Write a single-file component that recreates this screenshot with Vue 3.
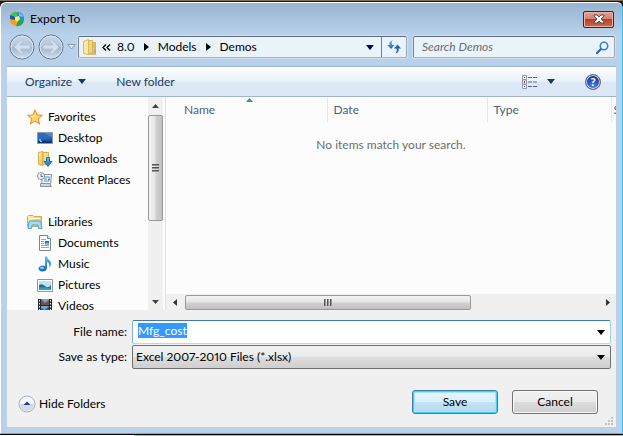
<script setup>
import { ref, onMounted } from 'vue'

const crumbs = ['8.0', 'Models', 'Demos']
const groups = [
  {
    name: 'Favorites',
    icon: 'star',
    items: [
      { name: 'Desktop', icon: 'desktop' },
      { name: 'Downloads', icon: 'downloads' },
      { name: 'Recent Places', icon: 'recent' }
    ]
  },
  {
    name: 'Libraries',
    icon: 'libraries',
    items: [
      { name: 'Documents', icon: 'documents' },
      { name: 'Music', icon: 'music' },
      { name: 'Pictures', icon: 'pictures' },
      { name: 'Videos', icon: 'videos' }
    ]
  }
]

const fileName = ref('Mfg_cost')
const search = ref('')
const fileInput = ref(null)

onMounted(() => {
  fileInput.value.focus({ preventScroll: true })
  fileInput.value.select()
})
</script>

<template>
  <div class="desktop">
    <svg class="defs" width="0" height="0" aria-hidden="true">
      <defs>
        <linearGradient id="folder" x1="0" y1="0" x2="1" y2="1">
          <stop offset="0" stop-color="#fff3b4" />
          <stop offset="1" stop-color="#e3b94c" />
        </linearGradient>
        <linearGradient id="blueArrow" x1="0" y1="0" x2="0" y2="1">
          <stop offset="0" stop-color="#5cc4f2" />
          <stop offset="1" stop-color="#1d5fae" />
        </linearGradient>
        <linearGradient id="round" x1="0" y1="0" x2="0" y2="1">
          <stop offset="0" stop-color="#c9d7e8" />
          <stop offset=".48" stop-color="#b3c5da" />
          <stop offset=".52" stop-color="#9fb5cd" />
          <stop offset="1" stop-color="#cfe0f2" />
        </linearGradient>

        <symbol id="i-star" viewBox="0 0 16 16">
          <path d="M8 .8 10 6l5.400.3-4.200 3.500 1.500 5.300L8 12.100l-4.700 3 1.500-5.300L.6 6.300 6 6z" fill="#ffd75e" stroke="#e8892b" stroke-linejoin="round" />
          <path d="M8 3 6.600 6.800 3 7l3 2.300z" fill="#fff2b0" />
        </symbol>
        <symbol id="i-desktop" viewBox="0 0 16 16">
          <path d="M.5 2.500h15v11H.5z" fill="#2457a8" stroke="#8e9aa8" />
          <path d="M1 3h14v5L1 10z" fill="#2f69bd" />
          <path d="M7 3h8v4z" fill="#4c89d4" />
          <path d="M1 10q5-1 9 2l5-3v2H1z" fill="#1d4b98" />
          <path d="M1 11h14v2H1z" fill="#12356e" />
          <path d="M2 9h2v2H2z" fill="#48c1ed" />
          <path d="M3 11h2v1H3z" fill="#9be36b" />
        </symbol>
        <symbol id="i-downloads" viewBox="0 0 16 16">
          <path d="M1.500 1.500 6 .5v14l-4.500-1z" fill="url(#folder)" stroke="#d3ad4b" />
          <path d="M6 1.500h5.500v12H6z" fill="#f7dc83" stroke="#d3ad4b" />
          <path d="M9.500 6.500h3v4H15l-4 5-4-5h2.500z" fill="url(#blueArrow)" stroke="#2470b8" />
        </symbol>
        <symbol id="i-recent" viewBox="0 0 16 16">
          <path d="M5.500 2.500h9l-1 10h-9z" fill="#f5f7f9" stroke="#8b949c" />
          <path d="M7 5h6M7 7h3M7 9h5" stroke="#5390c8" />
          <path d="M11 6.500h2v2h-2z" fill="#438fcf" />
          <path d="M3.500 11.500h9l2 3h-11z" fill="#d2d7dc" stroke="#8b949c" />
          <circle cx="4" cy="4" r="3.500" fill="#eef3f8" stroke="#8b949c" />
          <path d="M4 2v2.500h2" fill="none" stroke="#63717f" />
        </symbol>
        <symbol id="i-libraries" viewBox="0 0 16 16">
          <path d="M.5 12.500v-10l1-1H6l1 1h7.500v10z" fill="url(#folder)" stroke="#d3ad4b" />
          <path d="M2 4.500h11" stroke="#fff9d8" />
          <path d="M1 14.500 2 8l1-1h10l1 1 1 6.500h-3.500l-.5-3.500H5l-.5 3.500z" fill="#a5ddf5" stroke="#4fa5d2" />
        </symbol>
        <symbol id="i-documents" viewBox="0 0 16 16">
          <path d="M2.500.5h8l3 3v12h-11z" fill="#fff" stroke="#7d868f" />
          <path d="M10.500.5v3h3" fill="#dfe5ea" stroke="#7d868f" />
          <path d="M4 4.500h5M4 6.500h3M4 8.500h3M4 10.500h8M4 12.500h8" stroke="#98a9bb" />
          <path d="M8 6h4v4H8z" fill="#2672bd" />
          <path d="M8 8.500l2-1 2 1V10H8z" fill="#76bde8" />
        </symbol>
        <symbol id="i-music" viewBox="0 0 16 16">
          <path d="M8 .5h2c0 3 4 3.500 4 7 0 2-1 3-2 4 1-3 0-4.500-2-5.500v6c0 2-2 3.500-4.500 3.500S1.500 14 1.500 12.500s2-3 4.500-3c1 0 1.500.2 2 .5z" fill="url(#blueArrow)" />
          <ellipse cx="5" cy="12" rx="2" ry="1.200" fill="#78c8f2" />
        </symbol>
        <symbol id="i-pictures" viewBox="0 0 16 16">
          <path d="M.5 2.500h15v12H.5z" fill="#fff" stroke="#8e959c" />
          <path d="M2 4h12v9H2z" fill="#b9e3f8" />
          <path d="M2 8q3-2 6 1t6-1v5H2z" fill="#296f82" />
          <path d="M2 10.500q6-1 12 1V13H2z" fill="#2d9bc4" />
        </symbol>
        <symbol id="i-videos" viewBox="0 0 16 16">
          <path d="M1 1h14v15H1z" fill="#202830" />
          <path d="M4 1h8v6H4zM4 8h8v8H4z" fill="#5bafe0" />
          <path d="M4 1l4 4 4-3v5H4z" fill="#874a35" />
          <path d="M4 10l4 2 4-4v7H4z" fill="#285c91" />
          <path d="M2.500 2v14M13.500 2v14" stroke="#eef2f5" stroke-dasharray="1.500 1.500" />
        </symbol>
      </defs>
    </svg>

    <section class="dialog" role="dialog" aria-labelledby="title">
      <header class="titlebar">
        <svg class="logo" width="16" height="16" viewBox="0 0 16 16" aria-hidden="true">
          <path d="M2 3Q5 0 8 1l2 4-4 2-5-1z" fill="#55bd50" />
          <path d="M8 1c5 0 7 3 7 7l-5 1-2-4z" fill="#1d8fdc" />
          <path d="M10 2q4 1 4 4l-4-1z" fill="#66cdf4" />
          <path d="M15 8c0 5-4 8-8 7l1-6z" fill="#2ba34e" />
          <path d="M1 8q0 6 6 7l2-6-3-1z" fill="#f5a01b" />
          <path d="M1 4l5 2v3L1 8z" fill="#1c5ba9" />
          <path d="M6 6l4-1 1 3-3 3-2-2z" fill="#ffe98a" />
        </svg>
        <h1 id="title">Export To</h1>
        <button class="close" type="button" aria-label="Close">
          <svg width="12" height="10" viewBox="0 0 12 10" aria-hidden="true">
            <path d="M1 1h3l2 2 2-2h3v1L8 5l3 3v1H8L6 7 4 9H1V8l3-3-3-3z" fill="#fff" stroke="#4c4a55" />
          </svg>
        </button>
      </header>

      <div class="navbar">
        <div class="travel">
          <button type="button" aria-label="Back">
            <svg width="26" height="26" viewBox="0 0 26 26" aria-hidden="true">
              <circle cx="13" cy="13" r="12" fill="url(#round)" stroke="#5d7087" />
              <circle cx="13" cy="13" r="11" fill="none" stroke="#dce8f4" />
              <path d="M5 13l7-7h3l-4 5h10v4H11l4 5h-3z" fill="#d3dfed" stroke="#b3c4d8" />
            </svg>
          </button>
          <button type="button" aria-label="Forward">
            <svg width="26" height="26" viewBox="0 0 26 26" aria-hidden="true">
              <circle cx="13" cy="13" r="12" fill="url(#round)" stroke="#5d7087" />
              <circle cx="13" cy="13" r="11" fill="none" stroke="#dce8f4" />
              <path d="M21 13l-7-7h-3l4 5H5v4h10l-4 5h3z" fill="#d3dfed" stroke="#b3c4d8" />
            </svg>
          </button>
          <button class="recent" type="button" aria-label="Recent locations">
            <svg width="9" height="6" viewBox="0 0 9 6" aria-hidden="true">
              <path d="M.7.5h7.600L4.500 5z" fill="#dce8f5" stroke="#8a9db3" />
            </svg>
          </button>
        </div>
        <div class="address">
          <svg width="14" height="17" viewBox="0 0 14 17" aria-hidden="true">
            <path d="M.5 2.500 5.500.5v15l-5-1z" fill="#fbe9a6" stroke="#dcb95e" />
            <path d="M5.500 1.500h4v13h-4z" fill="#f3d67b" stroke="#dcb95e" />
            <path d="M9.500 3.500h3v12l-7-.5 4-1z" fill="#e8c257" stroke="#d8b252" />
            <path d="M12 11v3" stroke="#65aed8" />
          </svg>
          <svg class="chevrons" width="9" height="7" viewBox="0 0 9 7" aria-hidden="true">
            <path d="M4 .5l-3 3 3 3M8 .5l-3 3 3 3" fill="none" stroke="#000" stroke-width="1.300" />
          </svg>
          <nav class="crumbs" aria-label="Location">
            <template v-for="(c, i) in crumbs" :key="c">
              <svg v-if="i" width="5" height="8" viewBox="0 0 5 8" aria-hidden="true">
                <path d="M0 0l5 4-5 4z" />
              </svg>
              <a href="#">{{ c }}</a>
            </template>
          </nav>
          <button class="history" type="button" aria-label="Previous locations">
            <svg width="8" height="5" viewBox="0 0 8 5" aria-hidden="true"><path d="M0 0h8L4 5z" fill="#00005c" /></svg>
          </button>
          <button class="refresh" type="button" aria-label="Refresh">
            <svg width="15" height="14" viewBox="0 0 15 14" aria-hidden="true">
              <path d="M6 .5Q1.500 1 2.500 5H.5l3.500 4 3.500-4H5Q4 2 6 .5z" fill="url(#blueArrow)" />
              <path d="M8.500 13.500q4-1 3-5H14L10.500 4.500 7 8.500h2.500q1 3-1 5z" fill="#2263b4" />
            </svg>
          </button>
        </div>
        <label class="search">
          <input v-model="search" type="text" placeholder="Search Demos" aria-label="Search Demos" />
          <svg width="13" height="13" viewBox="0 0 13 13" aria-hidden="true">
            <path d="M1 12l4-4" stroke="#2363a9" stroke-width="2.200" stroke-linecap="round" />
            <circle cx="8" cy="5" r="3.700" fill="#eef7fd" stroke="#3484cc" stroke-width="1.600" />
          </svg>
        </label>
      </div>

      <div class="client">
        <div class="toolbar">
          <button type="button">Organize
            <svg width="8" height="5" viewBox="0 0 8 5" aria-hidden="true"><path d="M0 0h8L4 5z" fill="#1e395b" /></svg>
          </button>
          <button type="button">New folder</button>
          <button class="views" type="button" aria-label="Change your view">
            <svg width="16" height="14" viewBox="0 0 16 14" aria-hidden="true">
              <path d="M.5.5h4v4h-4zM.5 5h4v4h-4zM.5 9.500h4v4h-4z" fill="#fff" stroke="#8c9bb0" />
              <path d="M2 2h1v1H2z" fill="#2b8a3a" />
              <path d="M2 6h1v2H2z" fill="#e02020" />
              <path d="M2 11h1v1H2z" fill="#2060d0" />
              <path d="M6 2.500h4m1 0h4M6 7h4m1 0h4M6 11.500h4m1 0h4" stroke="#5a6c86" />
            </svg>
            <svg width="8" height="5" viewBox="0 0 8 5" aria-hidden="true"><path d="M0 0h8L4 5z" fill="#1e395b" /></svg>
          </button>
          <button class="help" type="button" aria-label="Help"><span>?</span></button>
        </div>

        <div class="panes">
          <nav class="tree" aria-label="Folders">
            <div class="tree-items">
              <ul v-for="g in groups" :key="g.name">
                <li>
                  <a href="#"><svg width="16" height="16" aria-hidden="true"><use :href="'#i-' + g.icon" /></svg>{{ g.name }}</a>
                </li>
                <li v-for="n in g.items" :key="n.name" class="child">
                  <a href="#"><svg width="16" height="16" aria-hidden="true"><use :href="'#i-' + n.icon" /></svg>{{ n.name }}</a>
                </li>
              </ul>
            </div>
            <div class="vbar">
              <svg width="7" height="4" viewBox="0 0 7 4" aria-hidden="true"><path d="M0 4h7L3.500 0z" fill="#444" /></svg>
              <div class="vthumb"><i></i><i></i><i></i></div>
              <svg width="7" height="4" viewBox="0 0 7 4" aria-hidden="true"><path d="M0 0h7L3.500 4z" fill="#444" /></svg>
            </div>
          </nav>

          <div class="list">
            <table>
              <thead>
                <tr>
                  <th class="name" aria-sort="ascending">
                    Name
                    <svg class="sort" width="7" height="4" viewBox="0 0 7 4" aria-hidden="true"><path d="M0 4h7L3.500 0z" fill="#4c86a8" /></svg>
                  </th>
                  <th class="date">Date</th>
                  <th class="type">Type</th>
                  <th class="size">Size</th>
                </tr>
              </thead>
            </table>
            <p class="empty">No items match your search.</p>
            <div class="hbar">
              <svg width="4" height="7" viewBox="0 0 4 7" aria-hidden="true"><path d="M4 0v7L0 3.500z" fill="#333" /></svg>
              <div class="htrack"><div class="hthumb"><i></i><i></i><i></i></div></div>
              <svg width="4" height="7" viewBox="0 0 4 7" aria-hidden="true"><path d="M0 0v7l4-3.500z" fill="#333" /></svg>
            </div>
          </div>
        </div>

        <form class="form" @submit.prevent>
          <div class="fields">
            <label for="file-name">File name:</label>
            <div class="combo file">
              <input id="file-name" ref="fileInput" v-model="fileName" type="text" autocomplete="off" />
              <svg width="8" height="5" viewBox="0 0 8 5" aria-hidden="true"><path d="M0 0h8L4 5z" /></svg>
            </div>
            <label for="file-type">Save as type:</label>
            <div class="combo kind">
              <select id="file-type">
                <option>Excel 2007-2010 Files (*.xlsx)</option>
              </select>
              <svg width="8" height="5" viewBox="0 0 8 5" aria-hidden="true"><path d="M0 0h8L4 5z" /></svg>
            </div>
          </div>
          <div class="actions">
            <button class="hide" type="button">
              <svg width="18" height="18" viewBox="0 0 18 18" aria-hidden="true">
                <circle cx="9" cy="9" r="8" fill="#f4f6fa" stroke="#a4aecb" />
                <path d="M2 9a7 7 0 0 0 14 0z" fill="#d5dae4" />
                <path d="M5.500 10h7L9 6.500z" fill="#1d3f8c" />
              </svg>
              Hide Folders
            </button>
            <button class="push primary" type="submit">Save</button>
            <button class="push" type="button">Cancel</button>
          </div>
          <svg class="grip" width="9" height="9" viewBox="0 0 9 9" aria-hidden="true">
            <path d="M6 0h2v2H6zM3 3h2v2H3zM6 3h2v2H6zM0 6h2v2H0zM3 6h2v2H3zM6 6h2v2H6z" fill="#c2c2c2" />
          </svg>
        </form>
      </div>
    </section>
    <div class="behind"></div>
  </div>
</template>

<style>
body {
  background: #fff;
}
</style>

<style scoped>
* {
  box-sizing: border-box;
}

.desktop {
  display: flex;
  flex-direction: column;
  height: 100vh;
  min-height: 400px;
  background: #1a1a1a;
  border-top: 1px solid #77705f;
  padding-top: 1px;
  font: 12px/16px Lato, "Noto Sans", sans-serif;
  font-variant-numeric: proportional-nums;
  color: #000;
  overflow: hidden;
}

.defs {
  position: absolute;
}

button,
input,
select {
  font: inherit;
  color: inherit;
  margin: 0;
  padding: 0;
  border: 0;
  background: none;
  outline: 0;
}

svg {
  display: block;
  flex: none;
}

a {
  color: inherit;
  text-decoration: none;
}

.dialog {
  flex: 1;
  min-height: 0;
  display: flex;
  flex-direction: column;
  padding: 0 6px 6px;
  border: 1px solid #fff;
  border-right-color: #35c4ee;
  border-bottom-color: #35c4ee;
  border-radius: 6px 6px 0 0;
  background: linear-gradient(#99b4d1, #b9d1ea 32px, #b9d1ea);
}

.titlebar {
  display: flex;
  align-items: center;
  height: 30px;
  padding: 2px 2px 0;
}

.titlebar h1 {
  flex: 1;
  margin: 0 0 0 5px;
  font-size: 12px;
  font-weight: 400;
}

.close {
  display: grid;
  place-items: center;
  width: 31px;
  height: 17px;
  border: 1px solid #4a1c24;
  border-radius: 2px;
  box-shadow: inset 0 0 0 1px #eab5a8;
  background: linear-gradient(#e2a093, #d58070 48%, #b93e27 50%, #cc6a4c);
}

.navbar {
  display: flex;
  align-items: center;
  height: 33px;
  padding: 0 1px 5px 2px;
}

.travel {
  display: flex;
  align-items: center;
  gap: 3px;
  width: 69px;
}

.address,
.search {
  display: flex;
  align-items: center;
  height: 22px;
  border: 1px solid #626f7f;
  border-color: #5e6b7b #9ba7b4 #a7b3bf #75818f;
  border-radius: 2px;
  background: #eaf2fa;
  box-shadow: 0 0 0 1px #cfdff0;
}

.address {
  flex: 1;
  padding-left: 4px;
}

.chevrons {
  margin: 0 6px 0 5px;
}

.crumbs {
  flex: 1;
  display: flex;
  align-items: center;
  gap: 9px;
}

.history {
  padding: 7px;
}

.refresh {
  display: grid;
  place-items: center;
  width: 25px;
  height: 20px;
  border-left: 1px solid #75818f;
}

.search {
  width: 202px;
  margin: 0 0 0 6px;
  padding: 0 5px 0 8px;
}

.search input {
  flex: 1;
  min-width: 0;
}

.search input::placeholder {
  color: #6d6d6d;
  font-style: italic;
  opacity: 1;
}

.client {
  flex: 1;
  min-height: 0;
  display: flex;
  flex-direction: column;
  background: #f0f0f0;
}

.toolbar {
  display: flex;
  align-items: center;
  gap: 30px;
  height: 31px;
  padding: 0 15px 0 18px;
  border-top: 1px solid #9fb5cf;
  border-bottom: 1px solid #a0b4cf;
  background: linear-gradient(#fdfeff, #e8f1fa 50%, #dce7f5 52%, #dce8f5);
  color: #1e395b;
}

.toolbar button {
  display: flex;
  align-items: center;
  gap: 6px;
}

.toolbar .views {
  margin-left: auto;
  gap: 9px;
}

.toolbar .help {
  justify-content: center;
  width: 16px;
  height: 16px;
  border: 1px solid #5f6675;
  border-radius: 50%;
  box-shadow: inset 0 0 0 1px #d5d9e2;
  background: radial-gradient(circle at 50% 80%, #4f86e8, #17309a 75%);
  color: #fff;
  font-weight: 700;
  font-size: 12px;
}

.panes {
  flex: 1;
  min-height: 0;
  display: flex;
  background: #fcfcfc;
}

.tree {
  display: flex;
  width: 159px;
  border-right: 1px solid #d6e5f5;
}

.tree-items {
  flex: 1;
  padding: 9px 0 0 20px;
  overflow: hidden;
}

ul {
  list-style: none;
  margin: 0 0 21px;
  padding: 0;
}

li a {
  display: flex;
  align-items: center;
  gap: 5px;
  height: 21px;
  white-space: nowrap;
}

.child {
  padding-left: 10px;
}

.vbar {
  display: flex;
  flex-direction: column;
  align-items: center;
  width: 15px;
  margin-right: 2px;
  padding: 7px 0 6px;
  background: #f0f0f0;
}

.vthumb {
  display: flex;
  flex-direction: column;
  align-items: center;
  justify-content: center;
  gap: 1px;
  width: 15px;
  height: 106px;
  margin: 7px 0 auto;
  border: 1px solid #979797;
  border-radius: 2px;
  background: linear-gradient(90deg, #f4f4f4, #e4e4e6 48%, #d2d2d4 52%, #c0c0c4);
}

.vthumb i {
  width: 7px;
  height: 2px;
  border-bottom: 1px solid #999;
  background: #555;
}

.list {
  flex: 1;
  min-width: 0;
  display: flex;
  flex-direction: column;
  overflow: hidden;
}

table {
  width: 100%;
  table-layout: fixed;
  border-collapse: collapse;
}

th {
  position: relative;
  height: 25px;
  padding: 0 0 0 6px;
  font-weight: 400;
  text-align: left;
  color: #4c607a;
  border-right: 1px solid #dfeaf7;
}

th.name {
  width: 161px;
  padding-left: 18px;
}

th.date {
  width: 160px;
}

th.size {
  width: 5px;
  padding-left: 2px;
  border: 0;
  overflow: hidden;
}

.sort {
  position: absolute;
  top: 1px;
  left: 50%;
}

.empty {
  margin: 15px 0 auto;
  text-align: center;
  color: #6d6d6d;
}

.hbar {
  display: flex;
  align-items: center;
  height: 16px;
  padding: 0 6px 0 7px;
  background: #f0f0f0;
}

.htrack {
  flex: 1;
  padding: 0 7px 0 8px;
}

.hthumb {
  display: flex;
  align-items: center;
  justify-content: center;
  gap: 1px;
  width: 69%;
  height: 15px;
  border: 1px solid #979797;
  border-radius: 2px;
  background: linear-gradient(#f4f4f4, #e4e4e6 48%, #d2d2d4 52%, #c0c0c4);
}

.hthumb i {
  width: 2px;
  height: 7px;
  border-right: 1px solid #999;
  background: #555;
}

.form {
  position: relative;
  padding: 10px 5px 13px 10px;
}

.fields {
  display: grid;
  grid-template-columns: 110px 1fr;
  align-items: center;
  gap: 1px 5px;
}

.fields label {
  text-align: right;
}

.combo {
  display: flex;
  align-items: center;
  height: 24px;
  padding-right: 5px;
  border: 1px solid #707070;
  border-radius: 2px;
}

.combo input,
.combo select {
  flex: 1;
  min-width: 0;
  height: 22px;
  appearance: none;
}

.file {
  background: #fff;
  border-color: #3d7bad #a9cfe8 #b7d9ed #7fb0d6;
}

.file input {
  padding: 0 0 4px 5px;
}

.file input::selection {
  background: #3399ff;
  color: #fff;
}

.kind {
  background: linear-gradient(#f2f2f2, #ebebeb 48%, #dddddd 52%, #cfcfcf);
}

.kind select {
  padding-left: 3px;
}

.actions {
  display: flex;
  align-items: center;
  gap: 14px;
  margin-top: 21px;
  padding: 0 13px 0 1px;
}

.hide {
  display: flex;
  align-items: center;
  gap: 3px;
  margin: 4px auto 0 0;
}

.push {
  width: 86px;
  height: 24px;
  border: 1px solid #707070;
  border-radius: 3px;
  box-shadow: inset 0 0 0 1px #fafafa;
  background: linear-gradient(#f2f2f2, #ebebeb 48%, #dddddd 50%, #cfcfcf);
}

.primary {
  border-color: #3c7fb1;
  box-shadow: inset 0 0 0 1px #3dd0fb, inset 0 0 0 2px #a5e5fa;
  background: linear-gradient(#eaf6fd, #dceffa 48%, #c5e3f4 50%, #b5d9ee);
}

.grip {
  position: absolute;
  right: 2px;
  bottom: 1px;
}

.behind {
  height: 2px;
  border-top: 1px solid #000;
  background: linear-gradient(90deg, #fff 134px, #8fd07f 134px);
}
</style>
